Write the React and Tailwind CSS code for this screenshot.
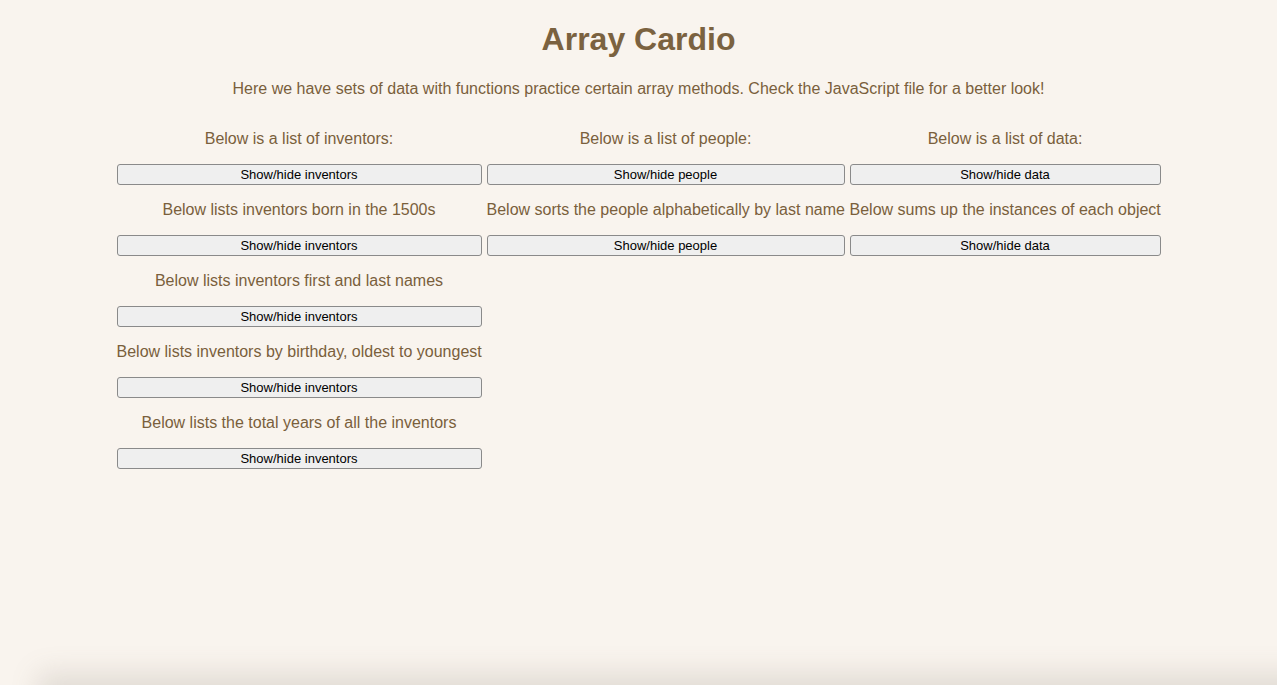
import React from "react";

const font = { fontFamily: '"Liberation Sans", Arial, Helvetica, sans-serif' };

function Item({ label, button }) {
  return (
    <>
      <p className="mt-4 mb-4 text-[16px] leading-[18px] whitespace-nowrap text-[#7a5f3c]">{label}</p>
      <button className="w-full h-[21px] rounded-[3px] border border-[#8a8a8a] bg-[#efefef] text-[13px] leading-[19px] text-black">
        {button}
      </button>
    </>
  );
}

function Column({ w, items }) {
  return (
    <div className={`flex flex-col items-stretch text-center ${w}`}>
      {items.map((it, i) => (
        <Item key={i} label={it[0]} button={it[1]} />
      ))}
    </div>
  );
}

export default function App() {
  return (
    <div className="relative min-h-[685px] h-[685px] overflow-hidden bg-[#f9f4ee]" style={font}>
      <h1 className="pt-[21px] text-center text-[32px] leading-[37px] font-bold text-[#7b6240]">Array Cardio</h1>
      <p className="mt-[22px] text-center text-[16px] leading-[18px] text-[#7a5f3c]">
        Here we have sets of data with functions practice certain array methods. Check the JavaScript file for a better look!
      </p>
      <div className="mt-4 flex justify-center items-start gap-[5px]">
        <Column
          w="w-[365px]"
          items={[
            ["Below is a list of inventors:", "Show/hide inventors"],
            ["Below lists inventors born in the 1500s", "Show/hide inventors"],
            ["Below lists inventors first and last names", "Show/hide inventors"],
            ["Below lists inventors by birthday, oldest to youngest", "Show/hide inventors"],
            ["Below lists the total years of all the inventors", "Show/hide inventors"],
          ]}
        />
        <Column
          w="w-[358px]"
          items={[
            ["Below is a list of people:", "Show/hide people"],
            ["Below sorts the people alphabetically by last name", "Show/hide people"],
          ]}
        />
        <Column
          w="w-[311px]"
          items={[
            ["Below is a list of data:", "Show/hide data"],
            ["Below sums up the instances of each object", "Show/hide data"],
          ]}
        />
      </div>
      <div className="absolute left-[50px] right-[-40px] bottom-[-30px] h-[30px] bg-[#e6e1dc] shadow-[0_0_28px_12px_rgba(120,110,100,0.18)]" />
    </div>
  );
}
